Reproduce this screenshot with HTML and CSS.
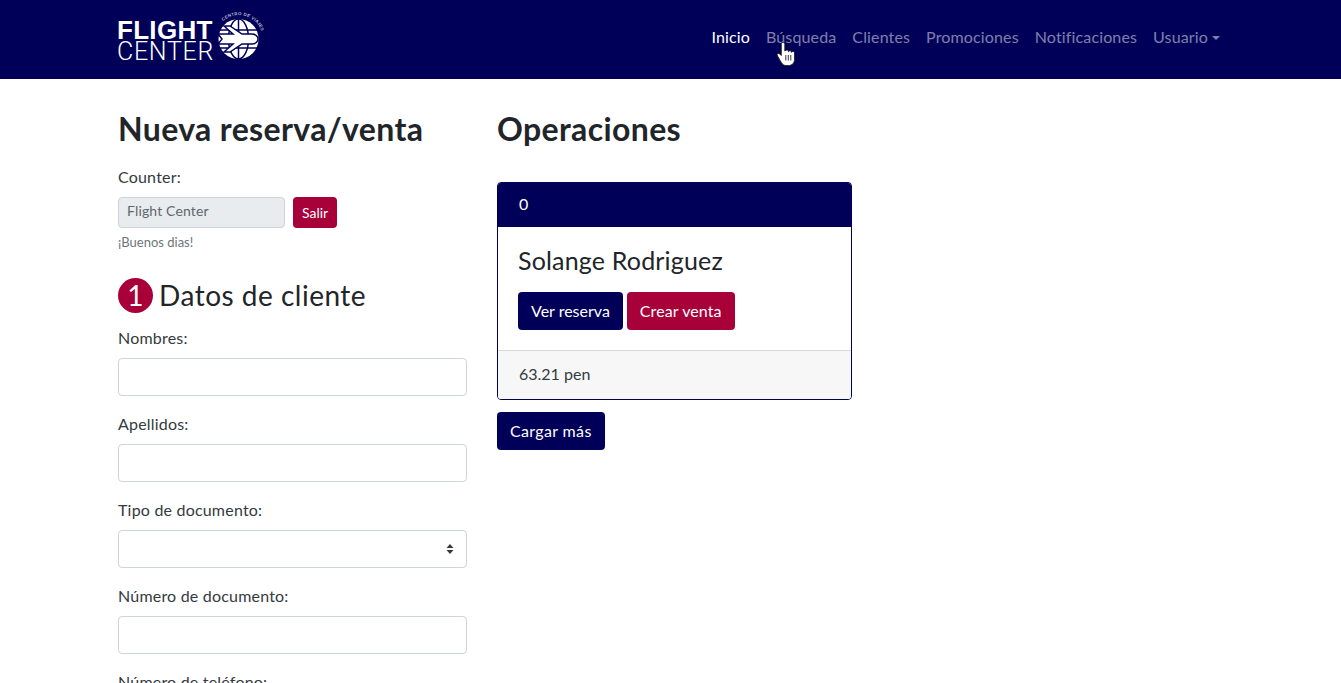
FILE: index.html
```html
<!DOCTYPE html>
<html lang="es">
<head>
<meta charset="utf-8">
<title>Flight Center</title>
<link rel="stylesheet" href="styles.css">
</head>
<body>
<nav class="navbar">
  <a class="brand" href="#">
    <span class="brand-text"><span class="brand-top">FLIGHT</span><span class="brand-bottom">CENTER</span></span>
    <svg class="globe" width="56" height="48" viewBox="0 0 56 48">
      <defs><path id="arc" d="M10 5 A24 24 0 0 1 49 17"/></defs>
      <circle cx="25.500" cy="23" r="20" fill="#fff"/>
      <g fill="none" stroke="#000058" stroke-width="1.500">
        <ellipse cx="25.500" cy="23" rx="10" ry="20"/>
        <path d="M25.500 3v40M7 14h37M7 32h37"/>
      </g>
      <path d="M5 18H20L11 10H17L29 18H39C43 18 45 21 45 23S43 28 39 28H29L17 36H11L20 28H5L9 23Z" fill="#fff" stroke="#000058" stroke-width="1.500"/>
      <text class="globe-label"><textPath href="#arc">CENTRO DE VIAJES</textPath></text>
    </svg>
  </a>
  <ul class="nav-links">
    <li><a class="nav-link active" href="#">Inicio</a></li>
    <li><a class="nav-link" href="#">Búsqueda</a></li>
    <li><a class="nav-link" href="#">Clientes</a></li>
    <li><a class="nav-link" href="#">Promociones</a></li>
    <li><a class="nav-link" href="#">Notificaciones</a></li>
    <li><a class="nav-link dropdown" href="#">Usuario</a></li>
  </ul>
  <svg class="cursor" width="18" height="24" viewBox="0 0 18 24">
    <path d="M6 .5C5 .5 4.300 1.300 4.300 2.300V13.500L2.800 12C2 11.200.8 11.200.4 12-.1 12.800.5 13.800 1 14.700 2.100 16.700 3.300 19 4.500 20.800 5.500 22.300 6.800 23.500 9 23.500H11.500C15 23.500 17.500 21.200 17.500 17.500V11C17.500 10 16.800 9.400 16 9.400S14.800 9.800 14.500 10.400C14.500 9.400 13.800 8.700 13 8.700S11.800 9.100 11.500 9.700C11.500 8.700 10.800 8 10 8S8.500 8.400 7.800 9V2.300C7.800 1.300 7 .5 6 .5Z" fill="#fff" stroke="#111" stroke-width=".8"/>
    <path d="M8.800 13v5.500M11.300 13v5.500M13.800 13v5.500" stroke="#222" stroke-width=".9"/>
  </svg>
</nav>

<main class="page">
  <section class="col-form">
    <h1 class="title">Nueva reserva/venta</h1>
    <label class="label">Counter:</label>
    <div class="counter-row">
      <input class="control control-sm readonly" value="Flight Center" readonly>
      <button class="btn btn-sm btn-red">Salir</button>
    </div>
    <p class="greeting">¡Buenos dias!</p>
    <h2 class="step"><span class="step-num">1</span>Datos de cliente</h2>
    <div class="field"><label class="label">Nombres:</label><input class="control"></div>
    <div class="field"><label class="label">Apellidos:</label><input class="control"></div>
    <div class="field"><label class="label">Tipo de documento:</label>
      <div class="select">
        <svg class="select-arrow" width="8" height="12" viewBox="0 0 8 12"><path d="M4 1l3.500 4h-7zM4 11L.5 7h7z" fill="#343a40"/></svg>
      </div>
    </div>
    <div class="field"><label class="label">Número de documento:</label><input class="control"></div>
    <div class="field"><label class="label">Número de teléfono:</label><input class="control"></div>
  </section>
  <section class="col-ops">
    <h1 class="title title-ops">Operaciones</h1>
    <article class="card">
      <header class="card-head">0</header>
      <div class="card-body">
        <h3 class="card-title">Solange Rodriguez</h3>
        <div class="card-actions">
          <button class="btn btn-navy">Ver reserva</button>
          <button class="btn btn-red">Crear venta</button>
        </div>
      </div>
      <footer class="card-foot">63.21 pen</footer>
    </article>
    <button class="btn btn-navy btn-load">Cargar más</button>
  </section>
</main>
</body>
</html>
```
FILE: styles.css
```css
* { box-sizing: border-box; }
html, body { height: 683px; overflow: hidden; }
body {
  margin: 0;
  background: #fff;
  color: #212529;
  font-family: "Lato", "Liberation Sans", sans-serif;
  font-size: 16px;
  line-height: 24px;
}
.navbar {
  position: relative;
  height: 79px;
  background: #000058;
  display: flex;
  align-items: flex-start;
  justify-content: space-between;
  padding: 0 113px 0 117px;
}
.brand { display: flex; align-items: flex-start; text-decoration: none; color: #fff; margin-top: 16px; }
.brand-text { display: flex; flex-direction: column; width: 96px; margin-top: 3px; }
.brand-top { font-family: "Liberation Sans", Arial, sans-serif; font-size: 26px; line-height: 22px; font-weight: 700; letter-spacing: .3px; }
.brand-bottom { font-family: "Roboto", sans-serif; font-size: 25px; line-height: 22px; font-weight: 300; letter-spacing: .7px; white-space: nowrap; }
.globe { overflow: visible; }
.globe-label { font-family: "Liberation Sans", sans-serif; font-size: 4.200px; fill: #fff; letter-spacing: .4px; }
.nav-links { display: flex; list-style: none; margin: 0; padding: 0; }
.nav-link {
  display: block;
  padding: 8px;
  margin-top: 17px;
  color: rgba(255,255,255,.5);
  text-decoration: none;
  font-size: 16px;
  line-height: 24px;
  letter-spacing: .14px;
}
.nav-link.active { color: #fff; }
.dropdown::after {
  content: "";
  display: inline-block;
  margin-left: 4px;
  vertical-align: 3px;
  border-top: 4.800px solid;
  border-left: 4.800px solid transparent;
  border-right: 4.800px solid transparent;
}
.cursor { position: absolute; left: 777px; top: 42px; }

.page {
  display: grid;
  grid-template-columns: 349px 355px;
  column-gap: 30px;
  padding: 0 118px;
}
.title { margin: 30px 0 0; font-size: 32px; line-height: 40px; font-weight: 700; letter-spacing: .37px; }
.label { display: block; margin: 0 0 8px; line-height: 23px; padding-bottom: 1px; letter-spacing: .2px; color: #343a40; }
.col-form .title { margin-bottom: 16px; }
.title-ops { margin-bottom: 33px; }
.control {
  display: block;
  width: 100%;
  height: 38px;
  padding: 6px 12px;
  border: 1px solid #ced4da;
  border-radius: 4px;
  background: #fff;
  font: inherit;
  color: #495057;
}
.counter-row { display: flex; gap: 8px; }
.control-sm { width: 167px; height: 31px; padding: 2px 8px 6px; font-size: 14px; line-height: 21px; letter-spacing: .15px; color: #60676d; }
.readonly { background: #e9ecef; }
.greeting { margin: 5px 0 0; font-size: 13px; line-height: 18px; color: #6c757d; }
.step {
  display: flex;
  align-items: center;
  gap: 6px;
  margin: 26px 0 13px;
  font-size: 28px;
  line-height: 36px;
  font-weight: 400;
  letter-spacing: .5px;
}
.step-num {
  width: 35px;
  height: 35px;
  border-radius: 50%;
  background: #a80038;
  color: #fff;
  display: flex;
  align-items: center;
  justify-content: center;
  font-size: 28px;
}
.field { margin-bottom: 16px; }
.select { position: relative; height: 38px; border: 1px solid #ced4da; border-radius: 4px; background: #fff; }
.select-arrow { position: absolute; right: 12px; top: 12px; }
.btn {
  display: inline-block;
  border: 1px solid transparent;
  border-radius: 4px;
  padding: 6px 12px;
  font: inherit;
  color: #fff;
  height: 38px;
}
.btn-sm { height: 31px; padding: 4px 8px; font-size: 14px; line-height: 21px; }
.btn-load { letter-spacing: .35px; }
.btn-navy { background: #000058; }
.btn-red { background: #a80038; }
.btn-red:not(.btn-sm) { letter-spacing: .1px; }
.card { border: 1px solid #000058; border-radius: 4px; overflow: hidden; margin-bottom: 12px; }
.card-head { height: 44px; padding: 9px 21px; background: #000058; color: #fff; }
.card-body { padding: 19px 20px; height: 123px; }
.card-title { margin: 0 0 17px; font-size: 25px; line-height: 29px; font-weight: 400; letter-spacing: .18px; }
.card-actions { display: flex; gap: 4px; }
.card-foot { height: 49px; padding: 11px 21px; background: #f7f7f7; border-top: 1px solid #d9d9d9; color: #343a40; }
```
